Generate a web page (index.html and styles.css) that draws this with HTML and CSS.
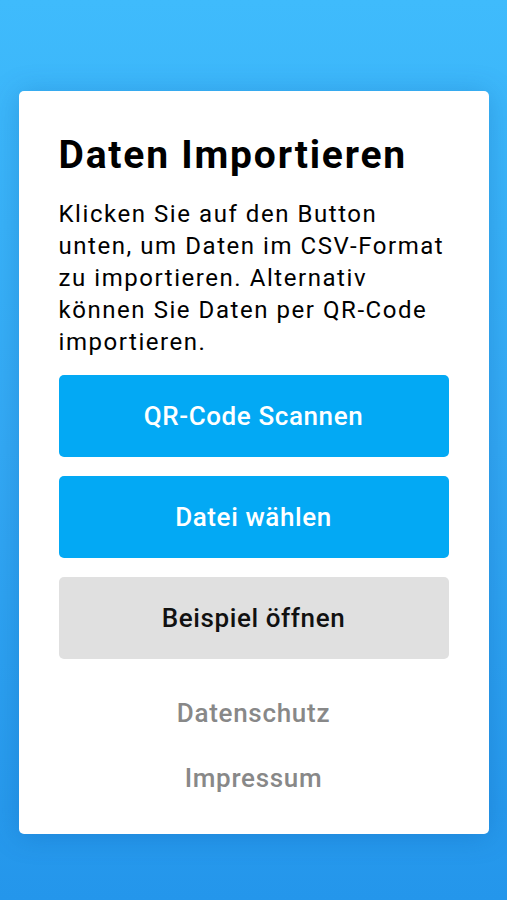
FILE: index.html
```html
<!DOCTYPE html>
<html lang="de">
<head>
    <meta charset="UTF-8">
    <meta name="viewport" content="width=device-width, initial-scale=1.0">
    <title>Daten Importieren</title>
    <link rel="stylesheet" href="styles.css">
</head>
<body>
    <main class="card">
        <h1>Daten Importieren</h1>
        <p>Klicken Sie auf den Button unten, um Daten im CSV-Format zu importieren. Alternativ können Sie Daten per QR-Code importieren.</p>
        <button class="btn btn-primary">QR-Code Scannen</button>
        <button class="btn btn-primary">Datei wählen</button>
        <button class="btn btn-grey">Beispiel öffnen</button>
        <nav class="links">
            <a href="#">Datenschutz</a>
            <a href="#">Impressum</a>
        </nav>
    </main>
</body>
</html>
```

FILE: styles.css
```css
html, body {
    margin: 0;
    padding: 0;
}
body {
    font-family: Roboto, "Noto Sans", sans-serif;
    min-height: 900px;
    background: linear-gradient(to bottom, #3fbbfc 0%, #33a9f4 50%, #2496eb 100%);
    overflow: hidden;
}
.card {
    box-sizing: border-box;
    width: 470px;
    height: 743px;
    margin: 91px auto 0;
    padding: 43px 40px 0;
    background: #fff;
    border-radius: 5px;
    box-shadow: 0 2px 28px rgba(0, 70, 150, 0.25);
    display: flex;
    flex-direction: column;
}
h1 {
    margin: 0;
    font-size: 39px;
    line-height: 42px;
    font-weight: 700;
    letter-spacing: 1.8px;
    white-space: nowrap;
    color: #000;
}
p {
    margin: 22px -6px 17px 0;
    font-size: 24px;
    line-height: 32px;
    letter-spacing: 1.55px;
    color: #000;
}
.btn {
    flex: none;
    height: 82px;
    margin: 0 0 19px;
    border: none;
    border-radius: 5px;
    font-family: inherit;
    font-size: 26px;
    font-weight: 500;
    letter-spacing: 0.6px;
    cursor: pointer;
}
.btn-primary {
    background: #03a9f4;
    color: #fff;
}
.btn-grey {
    background: #e0e0e0;
    color: #111;
    margin-bottom: 21px;
}
.links {
    display: flex;
    flex-direction: column;
}
.links a {
    height: 65px;
    display: flex;
    align-items: center;
    justify-content: center;
    font-size: 26px;
    font-weight: 500;
    letter-spacing: 0.7px;
    color: #888;
    text-decoration: none;
}
```
